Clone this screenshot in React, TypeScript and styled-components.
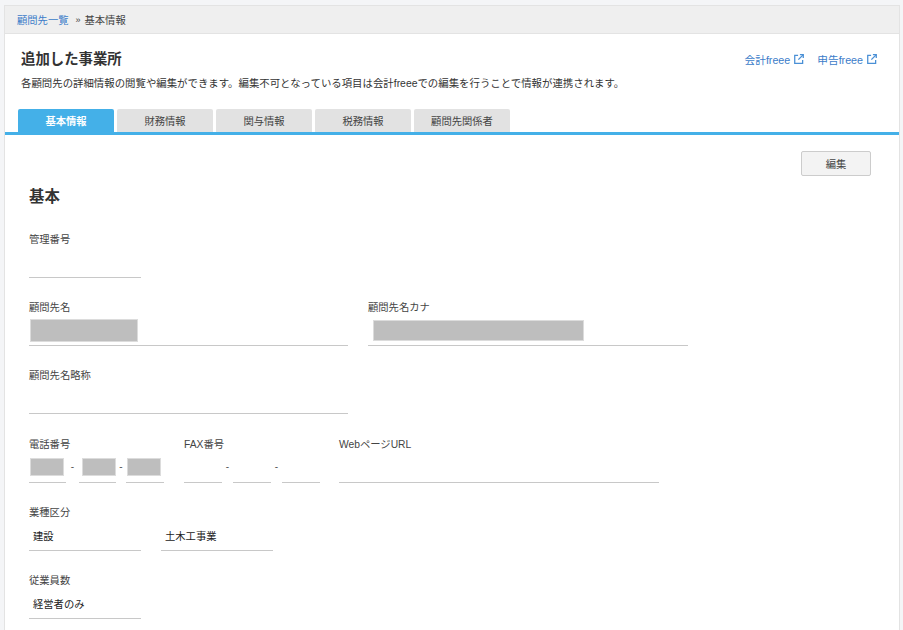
import styled, { createGlobalStyle } from "styled-components";

const GlobalStyle = createGlobalStyle`
  html, body {
    margin: 0;
    padding: 0;
    background: #f4f5f7;
    font-family: "Liberation Sans", "Noto Sans CJK JP", sans-serif;
    color: #333;
  }
`;

const Viewport = styled.div`
  height: 630px;
  overflow: hidden;
  padding: 5px 3px 0 4px;
  box-sizing: border-box;
`;

const Panel = styled.div`
  border: 1px solid #e3e3e3;
  border-bottom: none;
  background: #fff;
  min-height: 700px;
`;

const Breadcrumb = styled.div`
  display: flex;
  align-items: center;
  height: 27px;
  padding-left: 12px;
  background: #efefef;
  border-bottom: 1px solid #e3e3e3;
  font-size: 10.3px;
  color: #444;
`;

const CrumbLink = styled.a`
  color: #3b7cc9;
`;

const CrumbSep = styled.span`
  margin: 0 4px 0 7px;
  font-size: 9px;
`;

const Header = styled.div`
  display: flex;
  justify-content: space-between;
  align-items: flex-start;
  padding: 15px 22px 0 16px;
`;

const Title = styled.h1`
  margin: 0;
  font-size: 14.4px;
  line-height: 20px;
  font-weight: 700;
  color: #333;
`;

const Lead = styled.p`
  margin: 0;
  padding: 8px 0 0;
  font-size: 10.42px;
  line-height: 14px;
  color: #333;
`;

const ServiceLinks = styled.div`
  display: flex;
  gap: 13px;
  height: 20px;
`;

const ServiceLink = styled.a`
  display: flex;
  align-items: center;
  gap: 4px;
  font-size: 10.7px;
  color: #3b7cc9;
`;

const Tabs = styled.div`
  display: flex;
  gap: 3px;
  margin-top: 18px;
  padding-left: 13px;
  border-bottom: 3px solid #44b0e8;
`;

const Tab = styled.div<{ $active?: boolean }>`
  display: flex;
  align-items: center;
  justify-content: center;
  width: 96px;
  height: 23px;
  border-radius: 2px 2px 0 0;
  font-size: 10.3px;
  font-weight: ${(p) => (p.$active ? 700 : 400)};
  background: ${(p) => (p.$active ? "#44b0e8" : "#e2e2e2")};
  color: ${(p) => (p.$active ? "#fff" : "#444")};
`;

const Body = styled.div`
  position: relative;
  padding: 50px 0 0 24px;
`;

const EditButton = styled.button`
  position: absolute;
  top: 16px;
  right: 28px;
  width: 70px;
  height: 25px;
  padding: 0;
  border: 1px solid #ccc;
  border-radius: 2px;
  background: #f3f3f3;
  font-family: inherit;
  font-size: 10.3px;
  color: #444;
`;

const SectionTitle = styled.h2`
  height: 22px;
  margin: 0 0 24px;
  font-size: 15.4px;
  line-height: 24px;
  font-weight: 700;
  color: #333;
`;

const Row = styled.div<{ $gap?: number }>`
  display: flex;
  margin-bottom: ${(p) => p.$gap ?? 21}px;
`;

const Field = styled.div<{ $width: number; $gap?: number }>`
  width: ${(p) => p.$width}px;
  margin-right: ${(p) => p.$gap ?? 0}px;
`;

const Label = styled.div`
  height: 16px;
  font-size: 10.3px;
  line-height: 18px;
  color: #444;
`;

const Inputs = styled.div`
  display: flex;
`;

const Input = styled.div<{ $pad?: number; $w?: number }>`
  flex: ${(p) => (p.$w ? `0 0 ${p.$w}px` : "1")};
  display: flex;
  align-items: center;
  height: 31px;
  padding-left: ${(p) => p.$pad ?? 1}px;
  box-sizing: border-box;
  border-bottom: 1px solid #c8c8c8;
  font-size: 10.3px;
  color: #222;
`;

const Masked = styled.div<{ $w: number; $h: number }>`
  width: ${(p) => p.$w}px;
  height: ${(p) => p.$h}px;
  box-sizing: border-box;
  border: 1px solid #dcdcdc;
  background: #bebebe;
`;

const Dash = styled.span<{ $w: number }>`
  width: ${(p) => p.$w}px;
  height: 30px;
  line-height: 30px;
  text-align: center;
  font-size: 10px;
  color: #555;
`;

const ExternalIcon = () => (
  <svg width="10" height="10" viewBox="0 0 11 11" fill="none" stroke="#4a90d6" strokeWidth="1.4">
    <path d="M4.5 1.5H.8v8.7h8.7V6.5" />
    <path d="M6.5 .8h3.7v3.7" />
    <path d="M10 1 4.8 6.2" />
  </svg>
);

const tabs = ["基本情報", "財務情報", "関与情報", "税務情報", "顧問先関係者"];

const App = () => {
  return (
    <Viewport>
      <GlobalStyle />
      <Panel>
        <Breadcrumb>
          <CrumbLink>顧問先一覧</CrumbLink>
          <CrumbSep>»</CrumbSep>
          基本情報
        </Breadcrumb>
        <Header>
          <div>
            <Title>追加した事業所</Title>
            <Lead>各顧問先の詳細情報の閲覧や編集ができます。編集不可となっている項目は会計freeeでの編集を行うことで情報が連携されます。</Lead>
          </div>
          <ServiceLinks>
            <ServiceLink>会計freee<ExternalIcon /></ServiceLink>
            <ServiceLink>申告freee<ExternalIcon /></ServiceLink>
          </ServiceLinks>
        </Header>
        <Tabs>
          {tabs.map((tab, i) => (
            <Tab key={tab} $active={i === 0}>{tab}</Tab>
          ))}
        </Tabs>
        <Body>
          <EditButton>編集</EditButton>
          <SectionTitle>基本</SectionTitle>

          <Row>
            <Field $width={112}>
              <Label>管理番号</Label>
              <Input />
            </Field>
          </Row>

          <Row>
            <Field $width={319} $gap={20}>
              <Label>顧問先名</Label>
              <Input><Masked $w={108} $h={23} /></Input>
            </Field>
            <Field $width={320}>
              <Label>顧問先名カナ</Label>
              <Input $pad={5}><Masked $w={211} $h={21} /></Input>
            </Field>
          </Row>

          <Row $gap={22}>
            <Field $width={319}>
              <Label>顧問先名略称</Label>
              <Input />
            </Field>
          </Row>

          <Row>
            <Field $width={135} $gap={20}>
              <Label>電話番号</Label>
              <Inputs>
                <Input $w={37}><Masked $w={34} $h={18} /></Input>
                <Dash $w={13}>-</Dash>
                <Input $w={37} $pad={3}><Masked $w={34} $h={18} /></Input>
                <Dash $w={10}>-</Dash>
                <Input $w={38}><Masked $w={34} $h={18} /></Input>
              </Inputs>
            </Field>
            <Field $width={136} $gap={19}>
              <Label>FAX番号</Label>
              <Inputs>
                <Input $w={38} />
                <Dash $w={11}>-</Dash>
                <Input $w={38} />
                <Dash $w={11}>-</Dash>
                <Input $w={38} />
              </Inputs>
            </Field>
            <Field $width={320}>
              <Label>WebページURL</Label>
              <Input />
            </Field>
          </Row>

          <Row>
            <Field $width={112} $gap={20}>
              <Label>業種区分</Label>
              <Input $pad={4}>建設</Input>
            </Field>
            <Field $width={112}>
              <Label>&nbsp;</Label>
              <Input $pad={4}>土木工事業</Input>
            </Field>
          </Row>

          <Row>
            <Field $width={112}>
              <Label>従業員数</Label>
              <Input $pad={4}>経営者のみ</Input>
            </Field>
          </Row>
        </Body>
      </Panel>
    </Viewport>
  );
};

export default App;
